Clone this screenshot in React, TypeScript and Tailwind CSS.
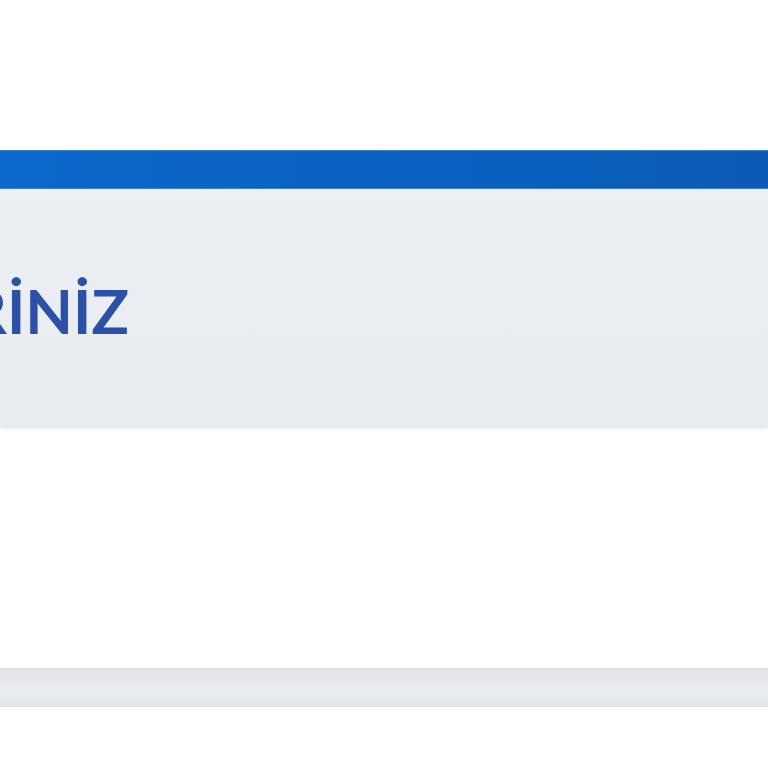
export default function App() {
  return (
    <div className="h-[768px] w-[768px] overflow-hidden bg-white">
      <div className="h-[150px]" />
      <div className="h-[39px] border-y border-[#3d7fc9] bg-gradient-to-r from-[#0a69cb] to-[#0b5bb6]" />
      <div className="flex h-[239px] items-center bg-gradient-to-b from-[#eceff3] to-[#e9ecef] shadow-[0_2px_3px_rgba(0,0,0,0.06)]">
        <div className="flex w-[129px] justify-end whitespace-nowrap pt-[3px]">
          <span className="font-['Lato',sans-serif] text-[62px] font-bold leading-none text-[#2a50a8]">
            BİLGİLERİNİZ
          </span>
        </div>
      </div>
      <div className="h-[240px]" />
      <div className="h-[39px] border-y border-[#dcdde0] bg-gradient-to-b from-[#dfe1e5] via-[#eaedef] to-[#e4e7ea]" />
    </div>
  );
}
